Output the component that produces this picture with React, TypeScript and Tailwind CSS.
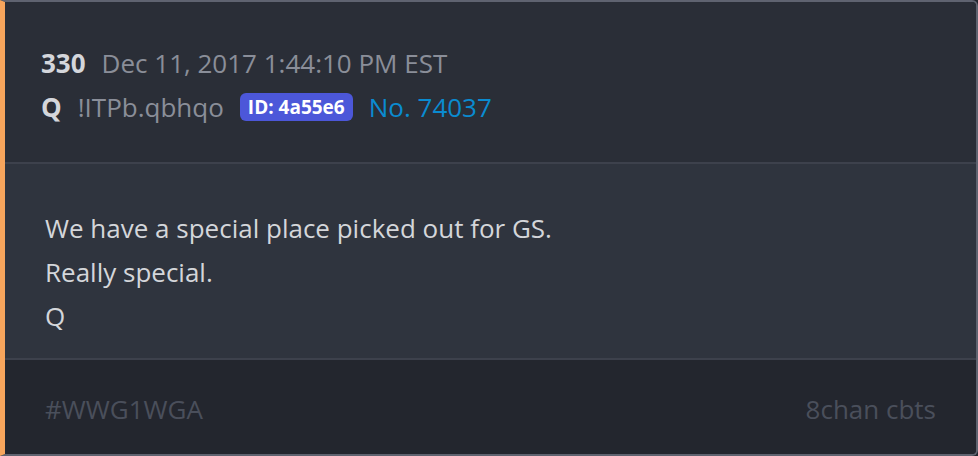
import React from 'react';

export default function App() {
  return (
    <div className="w-[978px] h-[456px] bg-[#23262e] font-['Open_Sans',sans-serif]">
      <div className="h-full flex flex-col overflow-hidden rounded-r-md border-2 border-[#5f6370] border-l-[5px] border-l-[#f7a55c]">
        <header className="bg-[#2a2e37] pl-9 pt-[39px] pb-[33px] text-[26px] leading-[44px]">
          <div className="flex items-center gap-4">
            <span className="font-bold text-[#d4d6db]">330</span>
            <span className="text-[#8a8e99]">Dec 11, 2017 1:44:10 PM EST</span>
          </div>
          <div className="flex items-center gap-4">
            <span className="font-bold text-[#d4d6db]">Q</span>
            <span className="text-[#8a8e99]">!ITPb.qbhqo</span>
            <span className="rounded-md bg-[#4c57d9] px-2 text-[19px] font-bold leading-7 text-white">ID: 4a55e6</span>
            <span className="text-[#0a8bd0]">No. 74037</span>
          </div>
        </header>
        <div className="h-[2px] bg-[#3d414c]" />
        <main className="bg-[#2f343e] pl-10 pt-[42px] pb-[20px] text-[26px] leading-[44px] text-[#d4d6da]">
          <p>We have a special place picked out for GS.</p>
          <p>Really special.</p>
          <p>Q</p>
        </main>
        <div className="h-[2px] bg-[#3d414c]" />
        <footer className="flex-1 flex items-center justify-between bg-[#23262e] pl-10 pr-10 pt-1 text-[26px] text-[#4a4f5b]">
          <span>#WWG1WGA</span>
          <span>8chan cbts</span>
        </footer>
      </div>
    </div>
  );
}
